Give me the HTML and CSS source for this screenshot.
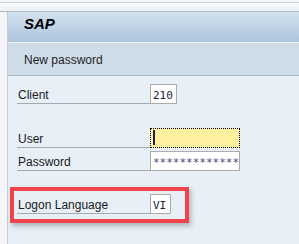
FILE: index.html
```html
<!doctype html>
<html lang="en">
  <head>
    <meta charset="utf-8">
    <title>SAP - New password</title>
    <link rel="stylesheet" href="styles.css">
  </head>
  <body>
    <div class="topbar"></div>

    <div class="window">
      <div class="title">SAP</div>
      <div class="subtitle">New password</div>

      <div class="form">
        <div class="row">
          <span class="label">Client</span>
          <span class="field field-client">210</span>
        </div>

        <div class="row row-user">
          <span class="label">User</span>
          <span class="field field-wide field-focus"><span class="caret"></span></span>
        </div>

        <div class="row row-password">
          <span class="label">Password</span>
          <span class="field field-wide">**************</span>
        </div>

        <div class="row row-lang">
          <span class="label">Logon Language</span>
          <span class="field field-lang">VI</span>
        </div>
      </div>
    </div>

    <!-- annotation around the logon language row -->
    <div class="highlight"></div>
  </body>
</html>
```

FILE: styles.css
```css
* {
  margin: 0;
  padding: 0;
  box-sizing: border-box;
}

body {
  width: 299px;
  height: 244px;
  overflow: hidden;
  position: relative;
  background: #f3f5f8;
  font-family: 'Liberation Sans', Arial, sans-serif;
  font-size: 12px;
  color: #1a1a24;
}

.topbar {
  margin-top: 2px;
  height: 10px;
  border-top: 1px solid #cdd1d7;
  border-bottom: 1px solid #aeb8c6;
  background: linear-gradient(180deg, #fafbfc 0%, #eceff4 100%);
}

.window {
  margin-left: 7px;
  height: 232px;
  border-left: 1px solid #c4cdd8;
  background: #e8eff6;
}

.title {
  height: 31px;
  padding: 3px 0 0 16px;
  border-bottom: 1px solid #edf2f8;
  background: linear-gradient(180deg, #d3e1ee 0%, #adc5de 100%);
  font-size: 15px;
  line-height: 18px;
  font-weight: bold;
  font-style: italic;
  color: #000;
}

.subtitle {
  height: 33px;
  padding: 10px 0 0 16px;
  border-bottom: 1px solid #a9b8c8;
  background: #cedce8;
  line-height: 14px;
  color: #1e1e1e;
}

.form {
  padding: 8px 0 0 9px;
}

.row {
  display: flex;
  height: 20px;
}

.row-user {
  margin-top: 24px;
}

.row-password {
  margin-top: 3px;
}

.row-lang {
  margin-top: 23px;
}

.label {
  width: 133px;
  height: 20px;
  padding: 3px 0 0 1px;
  border-bottom: 1px solid #a2aab4;
  line-height: 16px;
  white-space: nowrap;
}

.field {
  height: 20px;
  padding: 3px 0 0 2px;
  border: 1px solid #ababab;
  background: #fff;
  font-family: 'DejaVu Sans Mono', monospace;
  font-size: 11px;
  line-height: 15px;
  color: #1c1c3a;
  white-space: nowrap;
  overflow: hidden;
}

.field-client {
  width: 27px;
}

.field-lang {
  width: 21px;
}

.field-wide {
  width: 90px;
  color: #4a3f78;
}

.field-focus {
  border: 1px dotted #000;
  background: #fff0a0;
}

.caret {
  display: inline-block;
  width: 2px;
  height: 15px;
  margin-top: -2px;
  vertical-align: top;
  background: #142060;
}

.highlight {
  position: absolute;
  left: 10px;
  top: 187px;
  width: 179px;
  height: 36px;
  border: 4px solid #ef444b;
  box-shadow: 2px 3px 5px rgba(60, 60, 70, 0.35);
}
```
